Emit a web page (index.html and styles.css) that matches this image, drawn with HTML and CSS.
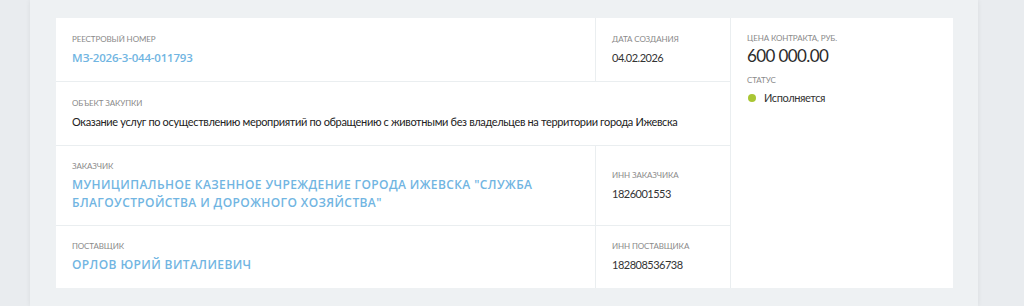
FILE: index.html
```html
<!DOCTYPE html>
<html lang="ru">
<head>
    <meta charset="UTF-8">
    <meta name="viewport" content="width=device-width, initial-scale=1.0">
    <title>Контракт МЗ-2026-3-044-011793</title>
    <link rel="stylesheet" href="styles.css">
</head>
<body>
    <div class="panel">
        <div class="card">
            <div class="cell cell-reg">
                <div class="label">Реестровый номер</div>
                <a class="link" href="#">МЗ-2026-3-044-011793</a>
            </div>
            <div class="cell cell-date">
                <div class="label">Дата создания</div>
                <div class="value">04.02.2026</div>
            </div>
            <div class="cell side">
                <div class="label">Цена контракта, руб.</div>
                <div class="price">600 000.00</div>
                <div class="label label-status">Статус</div>
                <div class="status"><span class="dot"></span>Исполняется</div>
            </div>
            <div class="cell cell-object">
                <div class="label">Объект закупки</div>
                <div class="text">Оказание услуг по осуществлению мероприятий по обращению с животными без владельцев на территории города Ижевска</div>
            </div>
            <div class="cell">
                <div class="label">Заказчик</div>
                <a class="link" href="#">Муниципальное казенное учреждение города Ижевска "Служба благоустройства и дорожного хозяйства"</a>
            </div>
            <div class="cell">
                <div class="label">ИНН заказчика</div>
                <div class="value">1826001553</div>
            </div>
            <div class="cell">
                <div class="label">Поставщик</div>
                <a class="link" href="#">Орлов Юрий Виталиевич</a>
            </div>
            <div class="cell">
                <div class="label">ИНН поставщика</div>
                <div class="value">182808536738</div>
            </div>
        </div>
    </div>
</body>
</html>
```

FILE: styles.css
```css
body {
    margin: 0;
    font-family: Lato, 'Open Sans', sans-serif;
    color: #333;
    background-color: #e9ecef;
}
.panel {
    width: 948px;
    margin-left: 30px;
    min-height: 306px;
    padding: 18px 25px 0 26px;
    box-sizing: border-box;
    background-color: #eef1f3;
    box-shadow: 0 0 5px rgba(0, 0, 0, 0.07);
}
.card {
    display: grid;
    grid-template-columns: 539px 134px 222px;
    grid-template-rows: 63px 63px 79px 62px;
    gap: 1px;
    background-color: #eaeef0;
    height: 270px;
}
.cell {
    background: white;
    padding: 0 16px;
    display: flex;
    flex-direction: column;
    justify-content: center;
}
.cell-object {
    grid-column: 1 / 3;
}
.side {
    grid-column: 3;
    grid-row: 1 / 5;
    justify-content: flex-start;
    padding-top: 14px;
}
.label {
    font-size: 8px;
    line-height: 12px;
    text-transform: uppercase;
    letter-spacing: -0.1px;
    color: #8a8a8a;
    margin-bottom: 4px;
}
.link {
    font-family: 'Open Sans', sans-serif;
    font-size: 12px;
    line-height: 18px;
    font-weight: 600;
    text-transform: uppercase;
    letter-spacing: 0.4px;
    color: #71b5e2;
    text-decoration: none;
}
.cell-reg .link {
    font-size: 11.5px;
    letter-spacing: -0.2px;
}
.value {
    font-size: 11px;
    line-height: 18px;
    letter-spacing: -0.5px;
    color: #333;
}
.text {
    font-size: 11px;
    line-height: 18px;
    letter-spacing: -0.35px;
    color: #222;
}
.side .label {
    margin-bottom: 2px;
}
.price {
    font-size: 17px;
    line-height: 20px;
    letter-spacing: -0.6px;
    color: #2b2b2b;
    margin-bottom: 8px;
}
.side .label-status {
    margin-bottom: 4px;
}
.status {
    display: flex;
    align-items: center;
    font-size: 11px;
    line-height: 16px;
    letter-spacing: -0.4px;
    color: #333;
}
.dot {
    width: 8px;
    height: 8px;
    border-radius: 50%;
    background-color: #a9c634;
    margin-left: 1px;
    margin-right: 8px;
}
```
